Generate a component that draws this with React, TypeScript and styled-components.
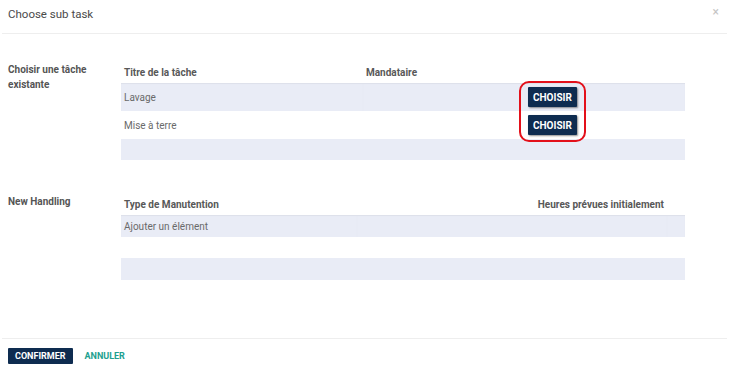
import styled, { createGlobalStyle } from 'styled-components';

const GlobalStyle = createGlobalStyle`
  html, body {
    margin: 0;
    padding: 0;
    background: #fff;
  }
  body {
    font-family: Roboto, "Liberation Sans", Arial, sans-serif;
  }
`;

// La fenêtre modale complète
const Modal = styled.div`
  display: flex;
  flex-direction: column;
  width: 731px;
  height: 373px;
  background: #fff;
  box-sizing: border-box;
`;

const Header = styled.header`
  display: flex;
  align-items: center;
  justify-content: space-between;
  height: 34px;
  margin: 0 4px 0 2px;
  padding: 0 8px 6px 6px;
  box-sizing: border-box;
  border-bottom: 1px solid #eeeeee;
`;

const Title = styled.h4`
  margin: 0;
  font-size: 11.5px;
  font-weight: 400;
  color: #4a4a4a;
`;

const Close = styled.span`
  font-size: 12px;
  color: #c4c4c4;
  margin-top: -4px;
  cursor: pointer;
`;

const Body = styled.main`
  flex: 1;
  display: flex;
  flex-direction: column;
  gap: 33px;
  padding: 27px 0 0 8px;
`;

// Une section : libellé à gauche, tableau à droite
const Section = styled.section`
  display: grid;
  grid-template-columns: 113px 564px;
`;

const Label = styled.div`
  font-size: 10px;
  font-weight: 700;
  color: #555;
  line-height: 15px;
  padding-top: 1px;
`;

const TableWrap = styled.div`
  position: relative;
`;

const Table = styled.table`
  width: 100%;
  border-collapse: collapse;
  font-size: 10px;
`;

const Th = styled.th<{ $align?: string; $width?: string }>`
  text-align: ${(p) => p.$align || 'left'};
  width: ${(p) => p.$width || 'auto'};
  font-weight: 700;
  color: #585858;
  height: 22px;
  padding: 0 3px;
  vertical-align: middle;
`;

const Tr = styled.tr<{ $shaded?: boolean; $h?: number }>`
  background: ${(p) => (p.$shaded ? '#e9ecf6' : '#fff')};
  height: ${(p) => p.$h || 28}px;

  &:first-child td {
    box-shadow: inset 0 1px 1px rgba(0, 0, 0, 0.05);
  }
`;

const Td = styled.td`
  color: #6a6a6a;
  padding: 0 3px;
  vertical-align: middle;
`;

const ChooseButton = styled.button`
  background: #0e2c50;
  color: #fff;
  border: none;
  border-radius: 1px;
  font-family: Roboto, "Liberation Sans", Arial, sans-serif;
  font-size: 10px;
  font-weight: 700;
  height: 20px;
  padding: 0 5px;
  box-shadow: 1px 1px 2px rgba(0, 0, 0, 0.45);
  cursor: pointer;
`;

// Encadré rouge d'annotation par-dessus les boutons
const Highlight = styled.div`
  position: absolute;
  left: 398px;
  top: 20px;
  width: 63px;
  height: 57px;
  border: 2px solid #e3101a;
  border-radius: 10px;
  pointer-events: none;
`;

const Footer = styled.footer`
  display: flex;
  align-items: center;
  gap: 12px;
  height: 34px;
  margin: 0 4px 0 2px;
  padding: 0 0 0 6px;
  border-top: 1px solid #eeeeee;
`;

const PrimaryButton = styled.button`
  background: #0e2c50;
  color: #fff;
  border: none;
  border-radius: 1px;
  font-family: Roboto, "Liberation Sans", Arial, sans-serif;
  font-size: 9px;
  font-weight: 700;
  height: 16px;
  padding: 0 7px;
  cursor: pointer;
`;

const LinkButton = styled.button`
  background: none;
  border: none;
  color: #21a08f;
  font-family: Roboto, "Liberation Sans", Arial, sans-serif;
  font-size: 9px;
  font-weight: 700;
  padding: 0;
  cursor: pointer;
`;

const tasks = ['Lavage', 'Mise à terre'];

const App = () => {
  return (
    <>
      <GlobalStyle />
      <Modal>
        <Header>
          <Title>Choose sub task</Title>
          <Close>×</Close>
        </Header>
        <Body>
          <Section>
            <Label>
              Choisir une tâche
              <br />
              existante
            </Label>
            <TableWrap>
              <Table>
                <thead>
                  <tr>
                    <Th $width="236px">Titre de la tâche</Th>
                    <Th $width="156px">Mandataire</Th>
                    <Th />
                  </tr>
                </thead>
                <tbody>
                  {tasks.map((t, i) => (
                    <Tr key={t} $shaded={i % 2 === 0}>
                      <Td>{t}</Td>
                      <Td />
                      <Td>
                        <ChooseButton>CHOISIR</ChooseButton>
                      </Td>
                    </Tr>
                  ))}
                  <Tr $shaded $h={21}>
                    <Td />
                    <Td />
                    <Td />
                  </Tr>
                </tbody>
              </Table>
              <Highlight />
            </TableWrap>
          </Section>
          <Section>
            <Label>New Handling</Label>
            <TableWrap>
              <Table>
                <thead>
                  <tr>
                    <Th>Type de Manutention</Th>
                    <Th $align="right">Heures prévues initialement</Th>
                    <Th $width="12px" />
                  </tr>
                </thead>
                <tbody>
                  <Tr $shaded $h={22}>
                    <Td>Ajouter un élément</Td>
                    <Td />
                    <Td />
                  </Tr>
                  <Tr $h={21}>
                    <Td />
                    <Td />
                    <Td />
                  </Tr>
                  <Tr $shaded $h={22}>
                    <Td />
                    <Td />
                    <Td />
                  </Tr>
                </tbody>
              </Table>
            </TableWrap>
          </Section>
        </Body>
        <Footer>
          <PrimaryButton>CONFIRMER</PrimaryButton>
          <LinkButton>ANNULER</LinkButton>
        </Footer>
      </Modal>
    </>
  );
};

export default App;
